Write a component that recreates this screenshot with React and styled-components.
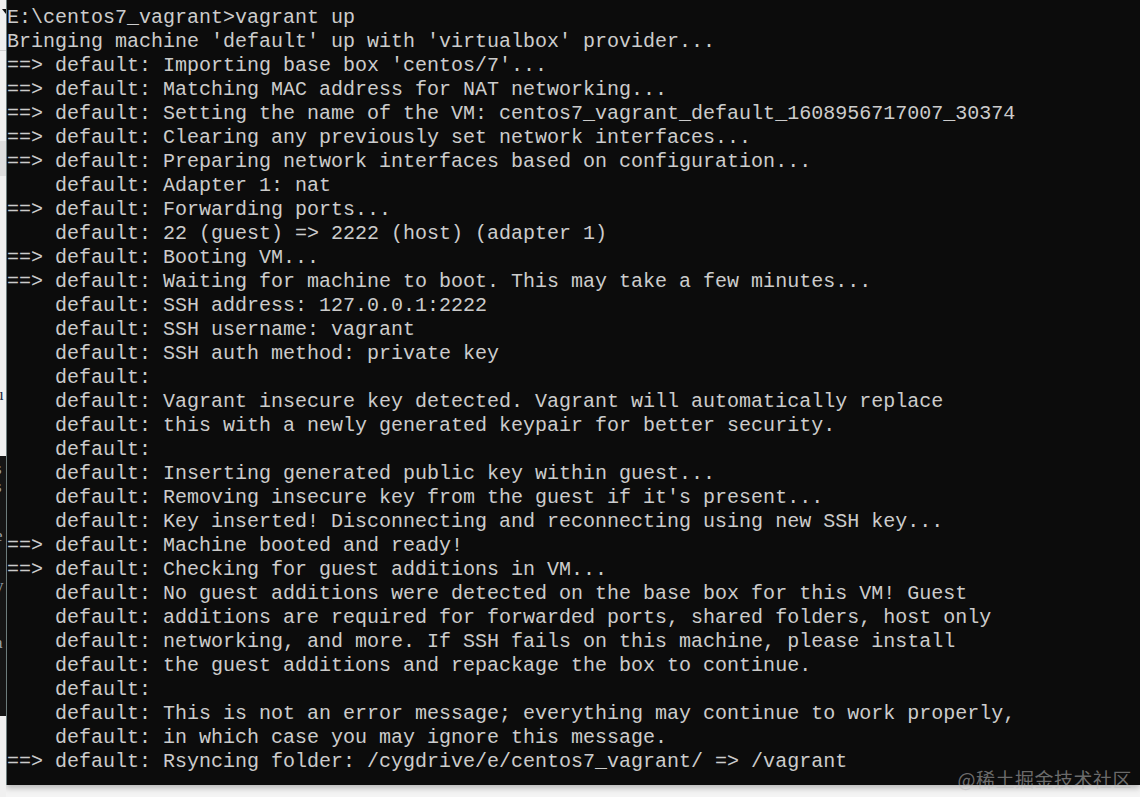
import React from 'react';
import styled, {createGlobalStyle} from 'styled-components';

const GlobalStyle = createGlobalStyle`
  html, body {
    margin: 0;
    padding: 0;
    background: #f4f4f4;
    overflow: hidden;
  }
`;

const Screen = styled.div`
  position: relative;
  display: flex;
  width: 1140px;
  height: 797px;
  overflow: hidden;
`;

// the window peeking out behind the console, on the left edge
const BackWindow = styled.div`
  width: 6px;
  flex: none;
  display: flex;
  flex-direction: column;
  overflow: hidden;
`;

const Pane = styled.div`
  position: relative;
  height: ${p => (p.$h ? `${p.$h}px` : 'auto')};
  flex: ${p => (p.$h ? 'none' : '1')};
  display: flex;
  flex-direction: column;
  background: ${p => p.$bg || '#f0f0f0'};
  border-bottom: ${p => (p.$line ? '1px solid #cfcfcf' : 'none')};
  overflow: hidden;
`;

const Corner = styled.div`
  position: absolute;
  right: 0;
  top: 9px;
  width: 0;
  height: 0;
  border-top: 5px solid #111;
  border-left: 4px solid transparent;
`;

const Glyph = styled.div`
  height: ${p => p.$h}px;
  flex: none;
  margin-left: -5px;
  font-family: "Liberation Serif", serif;
  font-size: 17px;
  line-height: ${p => p.$h}px;
  color: ${p => p.$color || '#9aa3ad'};
  white-space: pre;
`;

const Column = styled.div`
  flex: 1;
  display: flex;
  flex-direction: column;
  min-width: 0;
`;

const Console = styled.div`
  height: 785px;
  flex: none;
  box-sizing: border-box;
  padding-top: 6px;
  background: #0c0c0c;
  border-left: 1px solid #6d7c7c;
  box-shadow: 0 3px 6px rgba(0, 0, 0, 0.25);
  overflow: hidden;
`;

const Line = styled.div`
  height: 24px;
  font-family: "Liberation Mono", monospace;
  font-size: 20px;
  line-height: 24px;
  color: #cccccc;
  white-space: pre;
`;

const Watermark = styled.div`
  position: absolute;
  right: 8px;
  bottom: 6px;
  font-family: "Noto Sans CJK SC", sans-serif;
  font-size: 19px;
  line-height: 24px;
  color: rgba(190, 190, 190, 0.55);
  letter-spacing: 0.5px;
`;

const lines = [
  "E:\\centos7_vagrant>vagrant up",
  "Bringing machine 'default' up with 'virtualbox' provider...",
  "==> default: Importing base box 'centos/7'...",
  "==> default: Matching MAC address for NAT networking...",
  "==> default: Setting the name of the VM: centos7_vagrant_default_1608956717007_30374",
  "==> default: Clearing any previously set network interfaces...",
  "==> default: Preparing network interfaces based on configuration...",
  "    default: Adapter 1: nat",
  "==> default: Forwarding ports...",
  "    default: 22 (guest) => 2222 (host) (adapter 1)",
  "==> default: Booting VM...",
  "==> default: Waiting for machine to boot. This may take a few minutes...",
  "    default: SSH address: 127.0.0.1:2222",
  "    default: SSH username: vagrant",
  "    default: SSH auth method: private key",
  "    default:",
  "    default: Vagrant insecure key detected. Vagrant will automatically replace",
  "    default: this with a newly generated keypair for better security.",
  "    default:",
  "    default: Inserting generated public key within guest...",
  "    default: Removing insecure key from the guest if it's present...",
  "    default: Key inserted! Disconnecting and reconnecting using new SSH key...",
  "==> default: Machine booted and ready!",
  "==> default: Checking for guest additions in VM...",
  "    default: No guest additions were detected on the base box for this VM! Guest",
  "    default: additions are required for forwarded ports, shared folders, host only",
  "    default: networking, and more. If SSH fails on this machine, please install",
  "    default: the guest additions and repackage the box to continue.",
  "    default:",
  "    default: This is not an error message; everything may continue to work properly,",
  "    default: in which case you may ignore this message.",
  "==> default: Rsyncing folder: /cygdrive/e/centos7_vagrant/ => /vagrant",
];

// clipped letters of the window behind
const behind = [
  {h: 18, c: 's'},
  {h: 18, c: 's'},
  {h: 20, c: ','},
  {h: 40, c: 'e'},
  {h: 60, c: 'y'},
  {h: 54, c: 'a'},
  {h: 36, c: ','},
];

export default function App() {
  return (
    <Screen>
      <GlobalStyle />
      <BackWindow>
        <Pane $h={50} $line>
          <Corner />
        </Pane>
        <Pane $h={90} />
        <Pane $h={35} $bg="#dedede" />
        <Pane $h={228}>
          <Glyph $h={210} />
          <Glyph $h={18} $color="#1c2a44">u</Glyph>
        </Pane>
        <Pane $h={52} />
        <Pane $h={260} $bg="#151515">
          <Glyph $h={4} />
          {behind.map((g, i) => (
            <Glyph key={i} $h={g.h}>{g.c}</Glyph>
          ))}
        </Pane>
        <Pane />
      </BackWindow>
      <Column>
        <Console>
          {lines.map((l, i) => (
            <Line key={i}>{l}</Line>
          ))}
        </Console>
      </Column>
      <Watermark>@稀土掘金技术社区</Watermark>
    </Screen>
  );
}
